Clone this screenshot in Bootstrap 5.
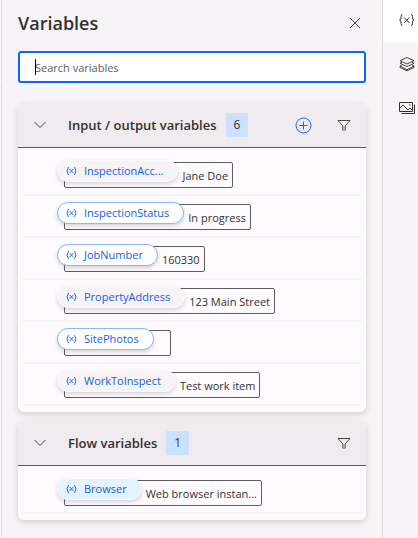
<!DOCTYPE html>
<html lang="en">
<head>
<meta charset="utf-8">
<meta name="viewport" content="width=device-width, initial-scale=1">
<title>Variables</title>
<link href="https://cdn.jsdelivr.net/npm/bootstrap@5.3.0/dist/css/bootstrap.min.css" rel="stylesheet">
<style>
  body { font-family: "Open Sans", "Noto Sans", sans-serif; font-size: 11px; line-height: 16px; color: #323130; background: #f7f4f7; }
  svg { display: block; fill: none; stroke: currentColor; }
  .canvas-edge { width: 2px; border-right: 1px solid #e3e0de; background: #fbf9fa; }
  .canvas-edge div { height: 41px; border-bottom: 1px solid #e3e0de; }
  .canvas-edge div:first-child { height: 46px; }
  .panel { padding: 11px 16px; min-width: 0; }
  .panel-title { font-size: 18px; line-height: 24px; font-weight: 600; }
  .icon-btn { border: 0; padding: 0; background: none; color: #4c4a48; }
  .add-btn { color: #0b66ff; margin-right: 24px; }
  .search-wrap { margin: 16px 0 20px; }
  .search-box { height: 32px; border: 2px solid #0b66ff; border-radius: 3px; padding: 0 15px; font-size: 11px; color: #323130; background: #fff; }
  .search-box::placeholder { color: #605e5c; opacity: 1; }
  .caret { left: 17px; top: 8px; width: 1px; height: 16px; background: #000; }
  .var-group { margin-bottom: 9px; background: #fefbfe; border-radius: 6px; box-shadow: 0 2px 6px rgba(60, 50, 40, .2); }
  .group-head { height: 45px; padding: 0 15px; background: #efebee; border-bottom: 1px solid #0f62e6; border-radius: 6px 6px 0 0; }
  .group-name { font-size: 13px; line-height: 18px; font-weight: 600; margin-left: 21px; }
  .count { margin-left: 9px; padding: 4px 8px; font-size: 12px; background: #cce1ff; }
  .group-body { padding: 6px 4px; }
  .var-row { padding: 8px 42px 6px; border-bottom: 2px solid #f7f4f6; }
  .value-box { height: 26px; max-width: 100%; border: 1px solid #605e5c; border-radius: 2px; }
  .value-text { padding: 5px 4px 0 4px; }
  .value-none { width: 16px; }
  .pill { height: 22px; margin: -3px 0 0 -8px; padding: 0 14px 0 8px; border: 1px solid #fdfafc; border-radius: 11px; background: #f7f3f6; color: #0f5fe6; box-shadow: 0 2px 4px rgba(0, 0, 0, .16); }
  .pill svg { margin-right: 7px; stroke-width: .9; }
  .pill-out { background: #fff; border-color: #8ab8fb; }
  .pill-flow { background: #e5f2ff; }
  .side-rail { width: 36px; border-left: 1px solid #dedbd7; }
  .side-rail button { height: 44px; padding-left: 15px; color: #323130; overflow: hidden; }
  .side-rail .current { height: 42px; padding-bottom: 3px; background: #fff; }
</style>
</head>
<body>
<svg class="d-none">
  <symbol id="var" viewBox="0 0 11 10"><path d="M2.5 1Q-.5 5 2.5 9M8.500 1Q11.500 5 8.500 9M3.700 3l3.600 4M7.300 3l-3.600 4"/></symbol>
  <symbol id="chev" viewBox="0 0 14 8"><path d="M1.500 1L7 6.500 12.500 1"/></symbol>
  <symbol id="funnel" viewBox="0 0 14 12"><path d="M1 1.500h12L8.500 6.500v4.500h-3V6.500z"/><path d="M5.500 7h3v4h-3z" fill="#aaa" stroke="none"/></symbol>
</svg>
<div class="d-flex min-vh-100">
  <div class="canvas-edge flex-shrink-0"><div></div><div></div></div>
  <main class="panel flex-grow-1">
    <header class="d-flex justify-content-between align-items-center">
      <h1 class="panel-title mb-0">Variables</h1>
      <button class="icon-btn me-1" type="button" aria-label="Close"><svg width="14" height="12" viewBox="0 0 14 12"><path d="M2 1l10 10M12 1L2 11"/></svg></button>
    </header>
    <div class="search-wrap position-relative">
      <input class="search-box w-100 d-block" type="text" placeholder="Search variables" aria-label="Search variables">
      <span class="caret position-absolute"></span>
    </div>
    <section class="var-group">
      <div class="group-head d-flex align-items-center">
        <button class="icon-btn" type="button" aria-label="Collapse input / output variables"><svg width="14" height="8"><use href="#chev"/></svg></button>
        <h2 class="group-name mb-0">Input / output variables</h2>
        <span class="count">6</span>
        <button class="icon-btn add-btn ms-auto" type="button" aria-label="Add variable"><svg width="18" height="18" viewBox="0 0 18 18"><circle cx="8.500" cy="9.500" r="7.500"/><path d="M8.500 5.500v8M4.500 9.500h8"/></svg></button>
        <button class="icon-btn" type="button" aria-label="Filter input / output variables"><svg width="14" height="12"><use href="#funnel"/></svg></button>
      </div>
      <div class="group-body">
        <div class="var-row d-flex"><div class="value-box d-flex align-items-start"><button class="pill d-flex align-items-center" type="button"><svg width="11" height="10"><use href="#var"/></svg>InspectionAcc...</button><span class="value-text">Jane Doe</span></div></div>
        <div class="var-row d-flex"><div class="value-box d-flex align-items-start"><button class="pill pill-out d-flex align-items-center" type="button"><svg width="11" height="10"><use href="#var"/></svg>InspectionStatus</button><span class="value-text">In progress</span></div></div>
        <div class="var-row d-flex"><div class="value-box d-flex align-items-start"><button class="pill pill-out d-flex align-items-center" type="button"><svg width="11" height="10"><use href="#var"/></svg>JobNumber</button><span class="value-text">160330</span></div></div>
        <div class="var-row d-flex"><div class="value-box d-flex align-items-start"><button class="pill d-flex align-items-center" type="button"><svg width="11" height="10"><use href="#var"/></svg>PropertyAddress</button><span class="value-text">123 Main Street</span></div></div>
        <div class="var-row d-flex"><div class="value-box d-flex align-items-start"><button class="pill pill-out d-flex align-items-center" type="button"><svg width="11" height="10"><use href="#var"/></svg>SitePhotos</button><span class="value-none"></span></div></div>
        <div class="var-row d-flex"><div class="value-box d-flex align-items-start"><button class="pill d-flex align-items-center" type="button"><svg width="11" height="10"><use href="#var"/></svg>WorkToInspect</button><span class="value-text">Test work item</span></div></div>
      </div>
    </section>
    <section class="var-group">
      <div class="group-head d-flex align-items-center">
        <button class="icon-btn" type="button" aria-label="Collapse flow variables"><svg width="14" height="8"><use href="#chev"/></svg></button>
        <h2 class="group-name mb-0">Flow variables</h2>
        <span class="count">1</span>
        <button class="icon-btn ms-auto" type="button" aria-label="Filter flow variables"><svg width="14" height="12"><use href="#funnel"/></svg></button>
      </div>
      <div class="group-body">
        <div class="var-row d-flex"><div class="value-box d-flex align-items-start"><button class="pill pill-flow d-flex align-items-center" type="button"><svg width="11" height="10"><use href="#var"/></svg>Browser</button><span class="value-text">Web browser instan...</span></div></div>
      </div>
    </section>
  </main>
  <nav class="side-rail d-flex flex-column flex-shrink-0" aria-label="Panes">
    <button class="icon-btn current d-flex align-items-center" type="button" aria-label="Variables"><svg width="18" height="14" viewBox="0 0 18 14"><path d="M4.500 1.500Q3 1.500 3 3.500V5q0 1.700-1.500 2Q3 7.300 3 9v1.500q0 2 1.500 2M13 1.500q1.500 0 1.500 2V5q0 1.700 1.500 2Q14.500 7.300 14.500 9v1.500q0 2-1.500 2M6.300 4.500l5 5.500M11.300 4.500l-5 5.500"/></svg></button>
    <button class="icon-btn d-flex align-items-center" type="button" aria-label="UI elements"><svg width="18" height="16" viewBox="0 0 18 16"><path d="M9 1.500l7 3.200-7 3.300-7-3.300zM4 6.300L2 7.300l7 3.300 7-3.300-2-1M4 9L2 10l7 3.800L16 10l-2-1M2 10v1.500l7 3.300 7-3.300V10" stroke-width=".9"/></svg></button>
    <button class="icon-btn d-flex align-items-center" type="button" aria-label="Images"><svg width="18" height="14" viewBox="0 0 18 14"><path d="M1.500 1.500h13v9h-13zM16.500 3.500v9h-13M2 7l3-3 5 5 2-2 2.500 2.500M11 4h1.500"/></svg></button>
  </nav>
</div>
<script src="https://cdn.jsdelivr.net/npm/bootstrap@5.3.0/dist/js/bootstrap.bundle.min.js"></script>
</body>
</html>
